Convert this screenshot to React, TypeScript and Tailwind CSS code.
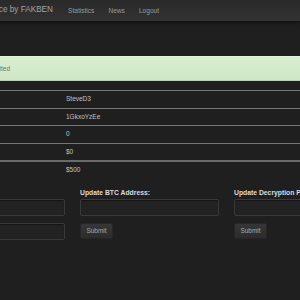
import React from "react"

const rows = [
  { label: "Username:", value: "SteveD3" },
  { label: "BTC Address:", value: "1GkxoYzEe" },
  { label: "Infections:", value: "0" },
  { label: "Earnings:", value: "$0" },
  { label: "Price:", value: "$500" },
]

function Input() {
  return (
    <div className="h-[17px] w-[139px] rounded-[2px] border border-[#3a3a3a] bg-[#222222] shadow-[inset_0_1px_1px_rgba(0,0,0,0.4)]" />
  )
}

function SubmitButton() {
  return (
    <button className="flex h-[16px] w-[33px] items-center justify-center rounded-[2px] border border-[#262626] bg-gradient-to-b from-[#363636] to-[#2c2c2c] text-[6.5px] text-[#a8a8a8]">
      Submit
    </button>
  )
}

export default function App() {
  return (
    <div className="min-h-[300px] w-full overflow-hidden bg-[#1f1f1f] font-['Liberation_Sans',Arial,sans-serif]">
      {/* navbar */}
      <nav className="flex h-[22px] items-center border-b border-[#141414] bg-gradient-to-b from-[#292929] to-[#333333] shadow-[0_1px_2px_rgba(0,0,0,0.5)]">
        <div className="flex w-[53px] shrink-0 justify-end">
          <span className="whitespace-nowrap text-[8.2px] text-[#a3a3a3]">Ransomware-as-a-Service by FAKBEN</span>
        </div>
        <ul className="ml-[15px] flex gap-[14px] text-[6.6px] text-[#9a9a9a]">
          <li>Statistics</li>
          <li>News</li>
          <li>Logout</li>
        </ul>
      </nav>

      {/* alert */}
      <div className="mt-[34px] flex h-[25px] items-center border-t border-b border-t-[#e4f3df] border-b-[#b5d3aa] bg-gradient-to-b from-[#d8eed0] to-[#cfe7c6]">
        <div className="flex w-[10px] shrink-0 justify-end">
          <span className="whitespace-nowrap text-[6.5px] text-[#62805a]">Settings have been submitted</span>
        </div>
      </div>

      {/* stats table */}
      <div className="mt-[9px] ml-[-120px] text-[6.5px] text-[#c4c4c4]">
        {rows.map((row, i) => (
          <div
            key={row.label}
            className={
              i === 4
                ? "flex h-[18px] items-center border-t-2 border-[#6a6a6a]"
                : "flex h-[17.5px] items-center border-t border-[#767676]"
            }
          >
            <div className="w-[186px] shrink-0 pl-[8px]">{row.label}</div>
            <div>{row.value}</div>
          </div>
        ))}
      </div>

      {/* forms */}
      <div className="mt-[11px] ml-[-74px] flex gap-[15px]">
        <div className="flex w-[139px] shrink-0 flex-col">
          <div className="mb-[2px] h-[8px] text-[6.8px] leading-[8px] font-bold text-[#dcdcdc]">Update Password:</div>
          <Input />
          <div className="mt-[7px]">
            <Input />
          </div>
          <div className="mt-[7px]">
            <SubmitButton />
          </div>
        </div>
        <div className="flex w-[139px] shrink-0 flex-col">
          <div className="mb-[2px] h-[8px] text-[6.8px] leading-[8px] font-bold whitespace-nowrap text-[#dcdcdc]">Update BTC Address:</div>
          <Input />
          <div className="mt-[7px]">
            <SubmitButton />
          </div>
        </div>
        <div className="flex w-[139px] shrink-0 flex-col">
          <div className="mb-[2px] h-[8px] text-[6.8px] leading-[8px] font-bold whitespace-nowrap text-[#dcdcdc]">Update Decryption Price:</div>
          <Input />
          <div className="mt-[7px]">
            <SubmitButton />
          </div>
        </div>
      </div>
    </div>
  )
}
